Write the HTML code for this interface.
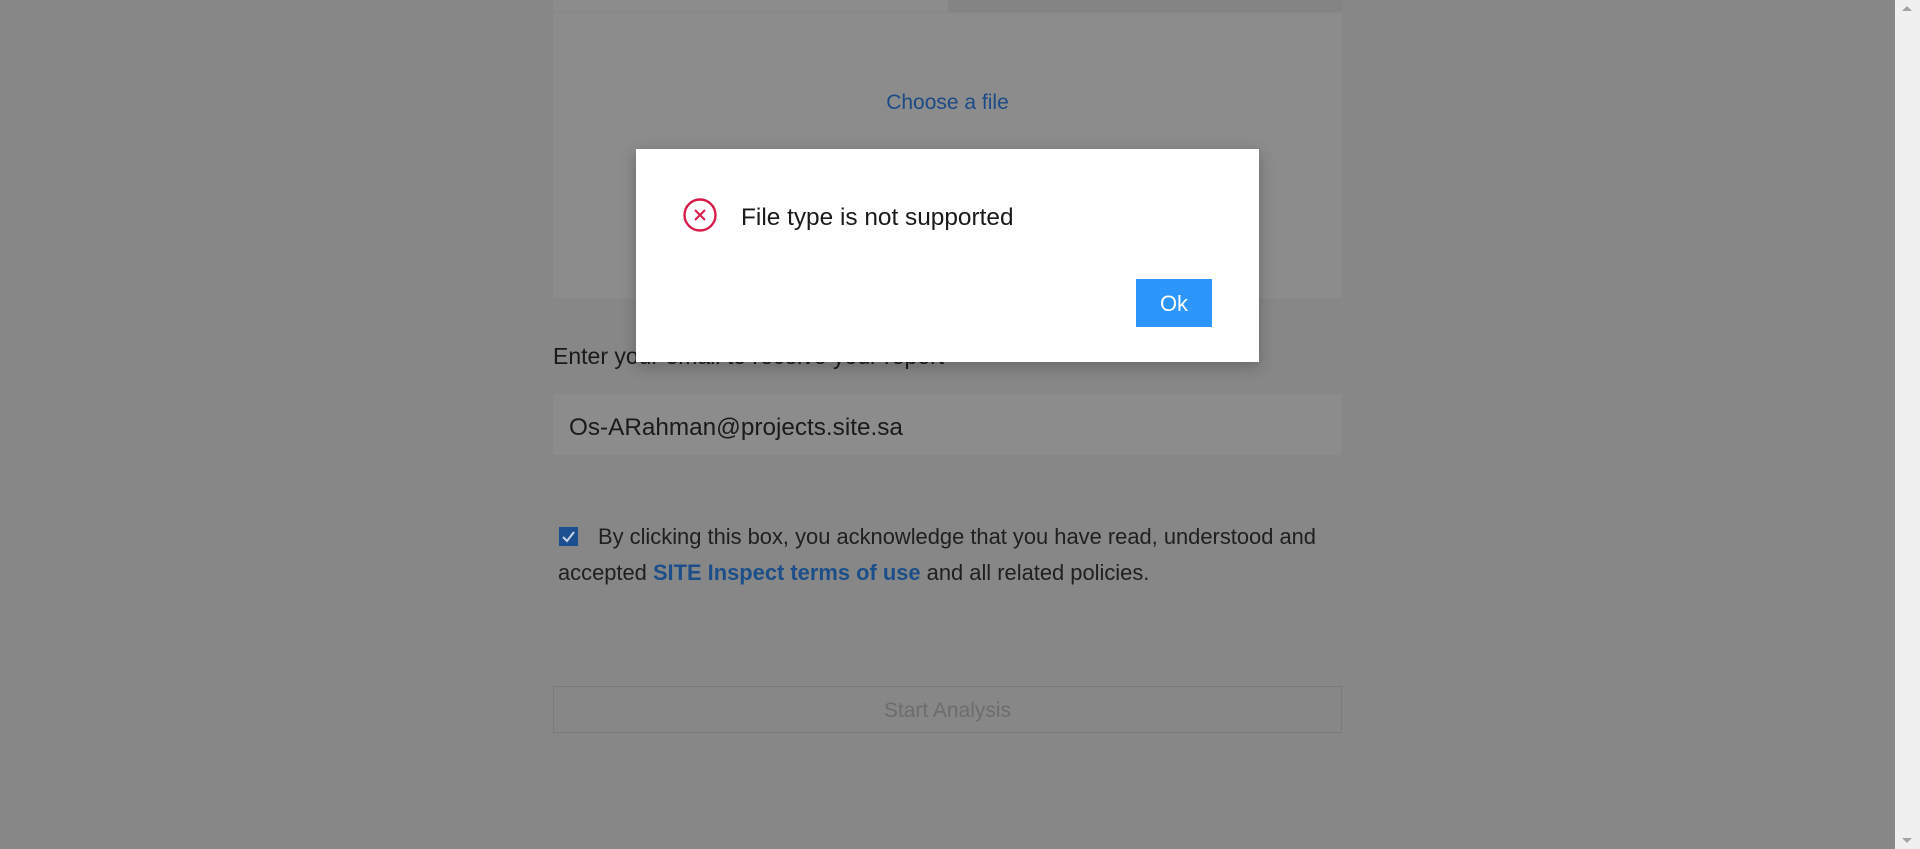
<!DOCTYPE html>
<html><head><style>
*{margin:0;padding:0;box-sizing:border-box}
html,body{width:1920px;height:849px;overflow:hidden;background:#878787;font-family:"Liberation Sans",Arial,sans-serif}
.abs{position:absolute}
</style></head><body>
<div class="abs" style="left:553px;top:0;width:395px;height:12px;background:#8c8c8c"></div>
<div class="abs" style="left:948px;top:0;width:394px;height:12px;background:#848484"></div>
<div class="abs" style="left:553px;top:13px;width:789px;height:285px;background:#8c8c8c"></div>
<div class="abs" style="left:553px;top:91px;width:789px;text-align:center;font-size:21px;color:#1c4a86">Choose a file</div>
<div class="abs" style="left:553px;top:343px;font-size:23px;color:#1a1a1a;white-space:nowrap">Enter your email to receive your report</div>
<div class="abs" style="left:553px;top:394px;width:789px;height:61px;background:#8c8c8c"></div>
<div class="abs" style="left:569px;top:414px;font-size:24.3px;color:#1a1a1a">Os-ARahman@projects.site.sa</div>
<div class="abs" style="left:559px;top:527px;width:19px;height:19px;background:#1c4f8f"></div>
<svg class="abs" style="left:559px;top:527px" width="19" height="19" viewBox="0 0 19 19"><path d="M4 10l4 4 7-9" stroke="#c8d4e4" stroke-width="2" fill="none"/></svg>
<div class="abs" style="left:558px;top:519px;width:820px;font-size:21.9px;line-height:36px;color:#1f1f1f;text-indent:40px">By clicking this box, you acknowledge that you have read, understood and accepted <b style="color:#1c4f8a">SITE Inspect terms of use</b> and all related policies.</div>
<div class="abs" style="left:553px;top:686px;width:789px;height:47px;border:1px solid #7a7a7a;text-align:center;line-height:48px;font-size:21px;color:#6d6d6d">Start Analysis</div>
<div class="abs" style="left:636px;top:149px;width:623px;height:213px;background:#fff;box-shadow:0 4px 14px rgba(0,0,0,.25)"></div>
<svg class="abs" style="left:682px;top:197px" width="36" height="36" viewBox="0 0 36 36"><circle cx="18" cy="18" r="15.5" stroke="#d81b4a" stroke-width="2.4" fill="none"/><path d="M13 13l10 10M23 13l-10 10" stroke="#d81b4a" stroke-width="2"/></svg>
<div class="abs" style="left:741px;top:204px;font-size:24.4px;color:#1a1a1a;white-space:nowrap">File type is not supported</div>
<div class="abs" style="left:1136px;top:279px;width:76px;height:48px;background:#2d96fd;color:#fff;font-size:22px;text-align:center;line-height:50px">Ok</div>
<div class="abs" style="left:1895px;top:0;width:25px;height:849px;background:#f0f0f0"></div>
<div class="abs" style="left:1902px;top:6px;width:0;height:0;border-left:5px solid transparent;border-right:5px solid transparent;border-bottom:5px solid #a3a3a3"></div>
<div class="abs" style="left:1902px;top:838px;width:0;height:0;border-left:5px solid transparent;border-right:5px solid transparent;border-top:5px solid #a3a3a3"></div>
</body></html>
